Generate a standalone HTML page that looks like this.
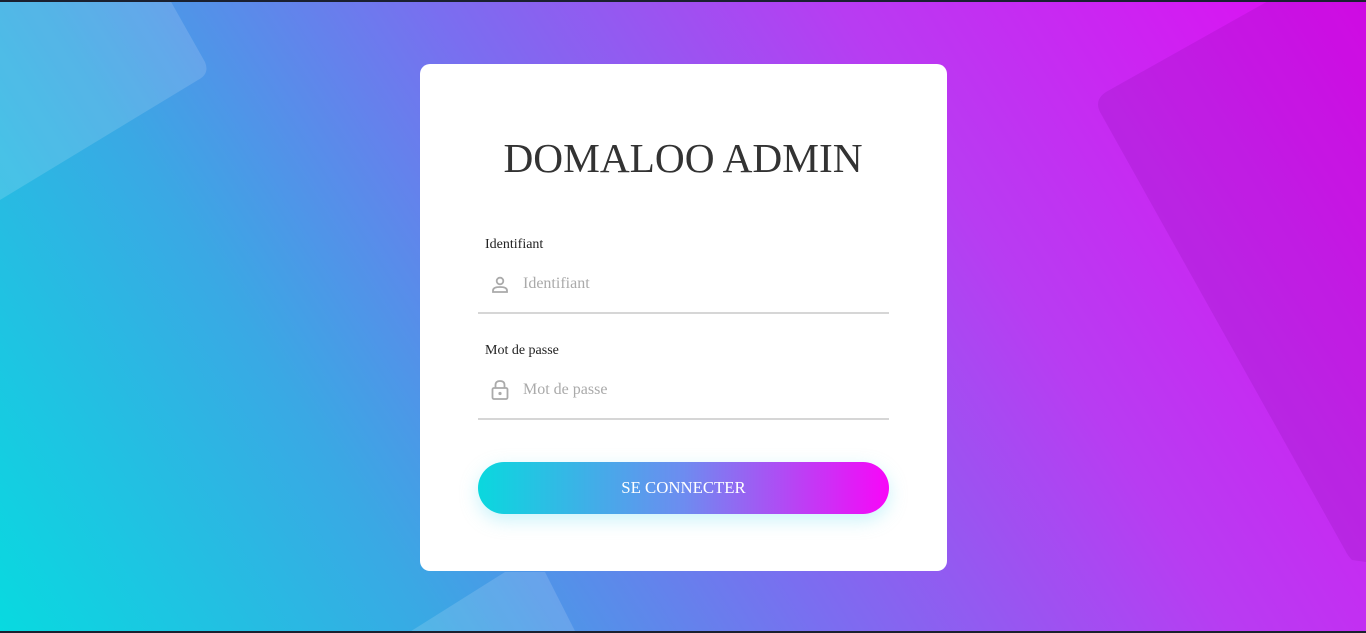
<!DOCTYPE html>
<html><head><meta charset="utf-8"><style>
html,body{margin:0;padding:0;width:1366px;height:633px;overflow:hidden}
body{position:relative;background:linear-gradient(58deg,#08dae0 0%,#3aa8e4 25%,#7a6ef0 47%,#b83cf2 70%,#e00cf2 100%);font-family:"Liberation Serif",serif}
.bar{position:absolute;left:0;width:1366px;height:2px;background:#1a2030}
svg.bg{position:absolute;left:0;top:0}
.card{position:absolute;left:420px;top:64px;width:527px;height:507px;background:#fff;border-radius:10px}
h1{position:absolute;left:0;width:100%;top:134px;margin:0;text-align:center;font-weight:normal;font-size:41.3px;color:#333}
.lbl{position:absolute;left:485px;font-size:14px;color:#222}
.ph{position:absolute;left:523px;font-size:16px;color:#aaa}
.line{position:absolute;left:478px;width:411px;height:2px;background:#d6d6d6}
.btn{position:absolute;left:478px;top:462px;width:411px;height:52px;border-radius:26px;background:linear-gradient(90deg,#0ad8de,#6d8cf0 50%,#f806f8);color:#fff;text-align:center;line-height:52px;font-size:16.8px;box-shadow:0 6px 18px rgba(100,220,240,.35)}
</style></head><body>
<svg class="bg" width="1366" height="633">
<path d="M0 0 L170 0 L205 62 Q210 74 198 80 L0 200 Z" fill="rgba(255,255,255,0.14)"/>
<path d="M1270 0 L1366 0 L1366 562 L1352 560 Q1348 556 1345 550 L1100 112 Q1094 100 1106 92 Z" fill="rgba(90,0,120,0.12)"/>
<path d="M408 633 L505 572 L545 572 L576 633 Z" fill="rgba(255,255,255,0.14)"/>
</svg>
<div class="bar" style="top:0"></div>
<div class="bar" style="top:631px"></div>
<div class="card"></div>
<h1>DOMALOO ADMIN</h1>
<div class="lbl" style="top:237px">Identifiant</div>
<svg style="position:absolute;left:490px;top:275px" width="20" height="20" viewBox="0 0 20 20"><circle cx="10" cy="6" r="3.3" fill="none" stroke="#aaa" stroke-width="1.8"/><path d="M3 17 V15.5 Q3 12 10 12 Q17 12 17 15.5 V17 Z" fill="none" stroke="#aaa" stroke-width="1.8"/></svg>
<div class="ph" style="top:275px">Identifiant</div>
<div class="line" style="top:312px"></div>
<div class="lbl" style="top:343px">Mot de passe</div>
<svg style="position:absolute;left:490px;top:379px" width="20" height="22" viewBox="0 0 20 22"><path d="M5.5 9 V6 Q5.5 2 10 2 Q14.5 2 14.5 6 V9" fill="none" stroke="#aaa" stroke-width="1.8"/><rect x="2.5" y="9" width="15" height="11" rx="1.5" fill="none" stroke="#aaa" stroke-width="1.8"/><circle cx="10" cy="14.5" r="1.6" fill="#aaa"/></svg>
<div class="ph" style="top:381px">Mot de passe</div>
<div class="line" style="top:418px"></div>
<div class="btn">SE CONNECTER</div>
</body></html>
